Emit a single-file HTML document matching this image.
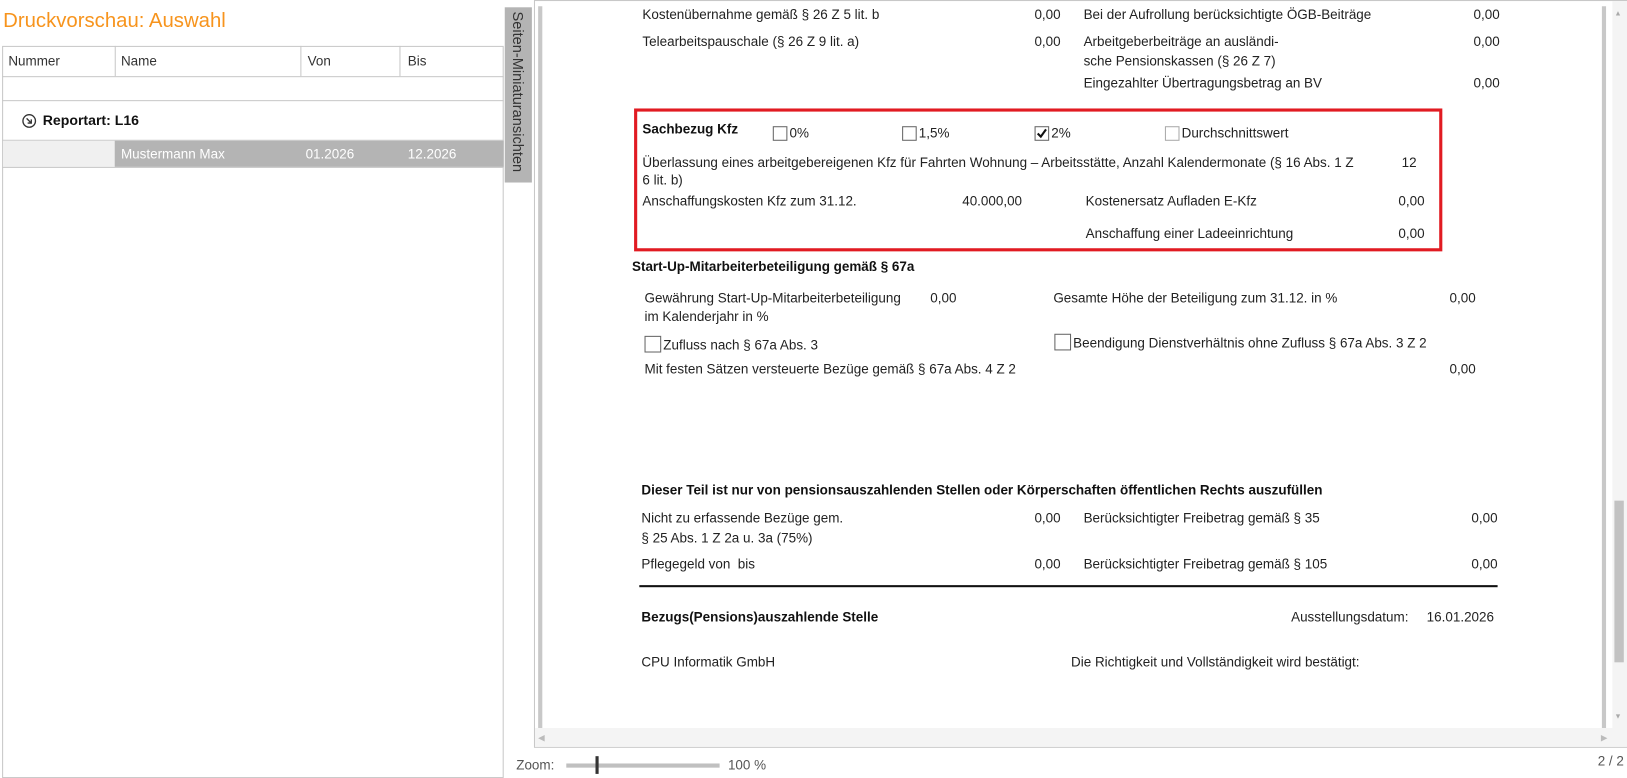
<!DOCTYPE html>
<html><head><meta charset="utf-8"><style>
html,body{margin:0;padding:0;width:1627px;height:777px;overflow:hidden;background:#fff}
#w{position:absolute;left:0;top:0;width:1560px;height:745px;transform-origin:0 0;transform:scale(1.0429,1.0430);font-family:"Liberation Sans",sans-serif;font-size:12.9px;color:#222}
.a{position:absolute;white-space:nowrap;line-height:16px}
.r{text-align:right}
.b{font-weight:bold;color:#111}
.cb{position:absolute;width:14px;height:14px;border:1px solid #666;background:#fff;box-sizing:border-box}
.l{position:absolute;background:#c8c8c8}
</style></head><body><div id="w">
<div class="a" style="left:3px;top:8px;font-size:19.5px;line-height:24px;color:#f7941d">Druckvorschau: Auswahl</div>
<div style="position:absolute;left:2px;top:44px;width:481px;height:702px;border:1px solid #c8c8c8;box-sizing:border-box"></div>
<div class="l" style="left:2px;top:73px;width:481px;height:1px"></div>
<div class="l" style="left:2px;top:96px;width:481px;height:1px"></div>
<div class="l" style="left:110px;top:44px;width:1px;height:29px"></div>
<div class="l" style="left:288px;top:44px;width:1px;height:29px"></div>
<div class="l" style="left:383px;top:44px;width:1px;height:29px"></div>
<div class="a" style="left:8px;top:51px;color:#333">Nummer</div>
<div class="a" style="left:116px;top:51px;color:#333">Name</div>
<div class="a" style="left:295px;top:51px;color:#333">Von</div>
<div class="a" style="left:391px;top:51px;color:#333">Bis</div>
<div class="l" style="left:2px;top:134px;width:481px;height:1px"></div>
<svg style="position:absolute;left:21px;top:109px" width="14" height="14" viewBox="0 0 14 14"><circle cx="7" cy="7" r="6" fill="none" stroke="#333" stroke-width="1.3"/><path d="M4.5 4.5L9 9M9 5.5V9H5.5" fill="none" stroke="#333" stroke-width="1.3"/></svg>
<div class="a b" style="left:41px;top:108px;font-size:13.5px">Reportart: L16</div>
<div style="position:absolute;left:3px;top:135px;width:107px;height:25px;background:#f0f0f0"></div>
<div style="position:absolute;left:110px;top:135px;width:373px;height:25px;background:#b4b4b4"></div>
<div class="a" style="left:116px;top:140px;color:#fff">Mustermann Max</div>
<div class="a" style="left:293px;top:140px;color:#fff">01.2026</div>
<div class="a" style="left:391px;top:140px;color:#fff">12.2026</div>
<div class="l" style="left:2px;top:160px;width:481px;height:1px"></div>
<div style="position:absolute;left:484px;top:7px;width:26px;height:168px;background:#b4b4b4"></div>
<div class="a" style="left:489px;top:11px;transform-origin:0 0;transform:translate(16px,0) rotate(90deg);color:#333;font-size:14px">Seiten-Miniaturansichten</div>
<div style="position:absolute;left:512px;top:0;width:1049px;height:717px;border:1px solid #c8c8c8;box-sizing:border-box"></div>
<div style="position:absolute;left:516px;top:6px;width:4px;height:692px;background:#c8c8c8"></div>
<div style="position:absolute;left:1536px;top:6px;width:4px;height:692px;background:#c8c8c8"></div>
<div style="position:absolute;left:1546px;top:1px;width:14px;height:697px;background:#f4f4f4"></div>
<div style="position:absolute;left:1548px;top:480px;width:9px;height:155px;background:#c2c2c2"></div>
<div class="a" style="left:1548px;top:6px;font-size:7px;color:#aaa">▲</div>
<div class="a" style="left:1548px;top:680px;font-size:7px;color:#aaa">▼</div>
<div style="position:absolute;left:513px;top:698px;width:1047px;height:18px;background:#f4f4f4"></div>
<div class="a" style="left:516px;top:700px;font-size:8px;color:#bbb">◀</div>
<div class="a" style="left:1535px;top:700px;font-size:8px;color:#bbb">▶</div>
<div class="a" style="left:616px;top:6px">Kostenübernahme gemäß § 26 Z 5 lit. b</div>
<div class="a r" style="left:917px;width:100px;top:6px">0,00</div>
<div class="a" style="left:1039px;top:6px">Bei der Aufrollung berücksichtigte ÖGB-Beiträge</div>
<div class="a r" style="left:1338px;width:100px;top:6px">0,00</div>
<div class="a" style="left:616px;top:32px">Telearbeitspauschale (§ 26 Z 9 lit. a)</div>
<div class="a r" style="left:917px;width:100px;top:32px">0,00</div>
<div class="a" style="left:1039px;top:32px">Arbeitgeberbeiträge an ausländi-</div>
<div class="a" style="left:1039px;top:51px">sche Pensionskassen (§ 26 Z 7)</div>
<div class="a r" style="left:1338px;width:100px;top:32px">0,00</div>
<div class="a" style="left:1039px;top:72px">Eingezahlter Übertragungsbetrag an BV</div>
<div class="a r" style="left:1338px;width:100px;top:72px">0,00</div>
<div style="position:absolute;left:608px;top:104px;width:775px;height:137px;border:3px solid #e11b22;box-sizing:border-box"></div>
<div class="a b" style="left:616px;top:116px">Sachbezug Kfz</div>
<div class="cb" style="left:741px;top:121px"></div><div class="a" style="left:757px;top:120px">0%</div>
<div class="cb" style="left:865px;top:121px"></div><div class="a" style="left:881px;top:120px">1,5%</div>
<div class="cb" style="left:992px;top:121px"><svg width="12" height="12" viewBox="0 0 12 12" style="position:absolute;left:0;top:0"><path d="M2 6L5 9L10 2" fill="none" stroke="#111" stroke-width="2"/></svg></div><div class="a" style="left:1008px;top:120px">2%</div>
<div class="cb" style="left:1117px;top:121px;border-color:#aaa"></div><div class="a" style="left:1133px;top:120px">Durchschnittswert</div>
<div class="a" style="left:616px;top:148px">Überlassung eines arbeitgebereigenen Kfz für Fahrten Wohnung – Arbeitsstätte, Anzahl Kalendermonate (§ 16 Abs. 1 Z</div>
<div class="a" style="left:1344px;top:148px">12</div>
<div class="a" style="left:616px;top:165px">6 lit. b)</div>
<div class="a" style="left:616px;top:185px">Anschaffungskosten Kfz zum 31.12.</div>
<div class="a r" style="left:880px;width:100px;top:185px">40.000,00</div>
<div class="a" style="left:1041px;top:185px">Kostenersatz Aufladen E-Kfz</div>
<div class="a r" style="left:1266px;width:100px;top:185px">0,00</div>
<div class="a" style="left:1041px;top:216px">Anschaffung einer Ladeeinrichtung</div>
<div class="a r" style="left:1266px;width:100px;top:216px">0,00</div>
<div class="a b" style="left:606px;top:248px">Start-Up-Mitarbeiterbeteiligung gemäß § 67a</div>
<div class="a" style="left:618px;top:278px">Gewährung Start-Up-Mitarbeiterbeteiligung</div>
<div class="a" style="left:618px;top:296px">im Kalenderjahr in %</div>
<div class="a" style="left:892px;top:278px">0,00</div>
<div class="a" style="left:1010px;top:278px">Gesamte Höhe der Beteiligung zum 31.12. in %</div>
<div class="a r" style="left:1315px;width:100px;top:278px">0,00</div>
<div class="cb" style="left:618px;top:322px;width:16px;height:16px"></div>
<div class="a" style="left:636px;top:323px">Zufluss nach § 67a Abs. 3</div>
<div class="cb" style="left:1011px;top:320px;width:16px;height:16px"></div>
<div class="a" style="left:1029px;top:321px">Beendigung Dienstverhältnis ohne Zufluss § 67a Abs. 3 Z 2</div>
<div class="a" style="left:618px;top:346px">Mit festen Sätzen versteuerte Bezüge gemäß § 67a Abs. 4 Z 2</div>
<div class="a r" style="left:1315px;width:100px;top:346px">0,00</div>
<div class="a b" style="left:615px;top:462px">Dieser Teil ist nur von pensionsauszahlenden Stellen oder Körperschaften öffentlichen Rechts auszufüllen</div>
<div class="a" style="left:615px;top:489px">Nicht zu erfassende Bezüge gem.</div>
<div class="a" style="left:615px;top:508px">§ 25 Abs. 1 Z 2a u. 3a (75%)</div>
<div class="a r" style="left:917px;width:100px;top:489px">0,00</div>
<div class="a" style="left:1039px;top:489px">Berücksichtigter Freibetrag gemäß § 35</div>
<div class="a r" style="left:1336px;width:100px;top:489px">0,00</div>
<div class="a" style="left:615px;top:533px">Pflegegeld von&nbsp; bis</div>
<div class="a r" style="left:917px;width:100px;top:533px">0,00</div>
<div class="a" style="left:1039px;top:533px">Berücksichtigter Freibetrag gemäß § 105</div>
<div class="a r" style="left:1336px;width:100px;top:533px">0,00</div>
<div style="position:absolute;left:613px;top:561px;width:823px;height:2px;background:#111"></div>
<div class="a b" style="left:615px;top:584px">Bezugs(Pensions)auszahlende Stelle</div>
<div class="a" style="left:1238px;top:584px">Ausstellungsdatum:</div>
<div class="a" style="left:1368px;top:584px">16.01.2026</div>
<div class="a" style="left:615px;top:627px">CPU Informatik GmbH</div>
<div class="a" style="left:1027px;top:627px">Die Richtigkeit und Vollständigkeit wird bestätigt:</div>
<div class="a" style="left:495px;top:726px;color:#555">Zoom:</div>
<div style="position:absolute;left:543px;top:732px;width:147px;height:4px;background:#c0c0c0"></div>
<div style="position:absolute;left:571px;top:725px;width:3px;height:17px;background:#333"></div>
<div class="a" style="left:698px;top:726px;color:#555">100 %</div>
<div class="a" style="left:1532px;top:722px;color:#555">2 / 2</div>
</div></body></html>
